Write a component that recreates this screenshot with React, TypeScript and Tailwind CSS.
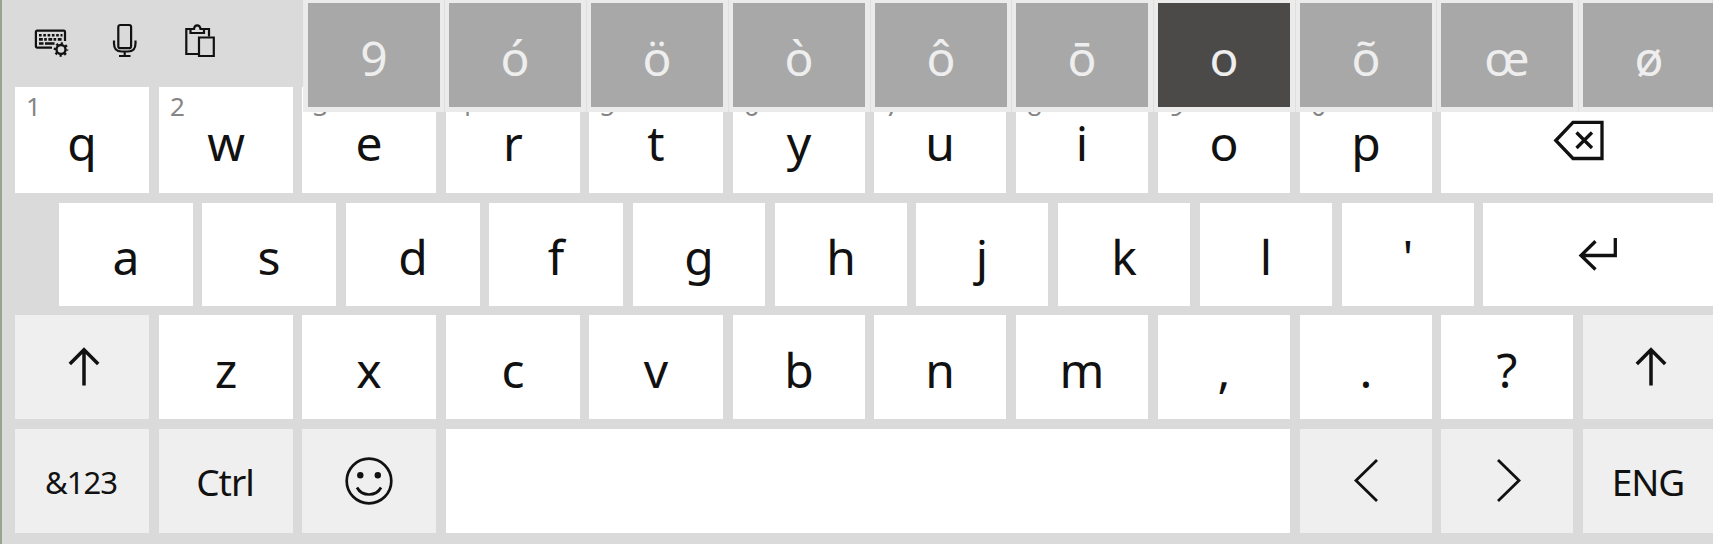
import React from "react";

const INK = "#111111";

type KeyProps = {
  label?: string;
  hint?: string;
  wide?: string;
  tone?: string;
  pad?: string;
  text?: string;
  children?: React.ReactNode;
};

function Key({ label, hint, wide = "w-[134px]", tone = "bg-white", pad = "pt-[30px]", text = "text-[48px]", children }: KeyProps) {
  return (
    <button className={`relative flex h-full justify-center overflow-hidden ${wide} ${tone} ${pad}`}>
      {hint && <span className="absolute left-[11px] top-[6px] text-[26px] leading-none text-[#858585]">{hint}</span>}
      {label && <span className={`whitespace-pre leading-none ${text}`}>{label}</span>}
      {children}
    </button>
  );
}

const widthAt = (i: number) => (i < 5 ? "w-[134px]" : "w-[132px]");

function ShiftIcon() {
  return (
    <svg width="34" height="42" viewBox="0 0 34 42" fill="none" stroke={INK} strokeWidth="3.5">
      <path d="M17 39.5V4M2.8 18L17 3.8L31.2 18" />
    </svg>
  );
}

function KeyboardIcon() {
  return (
    <svg width="36" height="30" viewBox="0 0 36 30" fill="none" stroke={INK}>
      <path d="M18 19.6H3.2Q1.9 19.6 1.9 18.3V4Q1.9 2.7 3.2 2.7H29.8Q31 2.7 31 4V13" strokeWidth="2.2" />
      <path d="M5 7.2H28.5" strokeWidth="2.6" strokeDasharray="2.6 1.7" />
      <path d="M5 11.4H28.5" strokeWidth="2.6" strokeDasharray="3.8 1.4 2.6 1.6" />
      <path d="M5 15.5H9.5M11 15.5H20.5" strokeWidth="2.4" />
      <circle cx="27" cy="21.5" r="4.5" strokeWidth="2.4" />
      <circle cx="27" cy="21.5" r="6.1" strokeWidth="2.4" strokeDasharray="2.2 2.591" strokeDashoffset="1" />
    </svg>
  );
}

function MicIcon() {
  return (
    <svg width="26" height="36" viewBox="0 0 26 36" fill="none" stroke={INK} strokeWidth="2.2">
      <rect x="6.3" y="2" width="12.8" height="23.2" rx="2" />
      <path d="M2 17.5V20.5Q2 28.5 9.5 28.5H16Q23.5 28.5 23.5 20.5V17.5" />
      <path d="M12.7 28.5V33M7 33H18.5" />
    </svg>
  );
}

function PasteIcon() {
  return (
    <svg width="32" height="36" viewBox="0 0 32 36" fill="none" stroke={INK} strokeWidth="2.2">
      <path d="M14 31H2.3V6H7M19 6H25V13.5" />
      <path d="M6.5 6H10Q10.3 2.3 13.2 2.3T16.5 6H20V10H6.5Z" />
      <path d="M15 14.5H29.8V33H15Z" />
    </svg>
  );
}

function BackspaceIcon() {
  return (
    <svg width="52" height="43" viewBox="0 0 52 43" fill="none" stroke={INK} strokeWidth="3.3">
      <path d="M2.8 21.5L20 3.3H49V39.5H20Z" />
      <path d="M23.5 13.5L39 29M39 13.5L23.5 29" />
    </svg>
  );
}

function EnterIcon() {
  return (
    <svg width="40" height="34" viewBox="0 0 40 34" fill="none" stroke={INK} strokeWidth="3.3">
      <path d="M37.3 1V18.5H3M17.5 4.3L3 18.5L17.5 32.5" />
    </svg>
  );
}

function SmileIcon() {
  return (
    <svg width="48" height="48" viewBox="0 0 48 48" fill="none" stroke={INK} strokeWidth="2.7">
      <circle cx="24" cy="24" r="22.3" />
      <path d="M12 30.5C17 39.8 31 39.8 36 30.5" />
      <circle cx="15.3" cy="18.2" r="3.2" fill={INK} stroke="none" />
      <circle cx="32.8" cy="18.2" r="3.2" fill={INK} stroke="none" />
    </svg>
  );
}

function Chevron({ d }: { d: string }) {
  return (
    <svg width="26" height="44" viewBox="0 0 26 44" fill="none" stroke={INK} strokeWidth="2.8">
      <path d={d} />
    </svg>
  );
}

const topRow = ["q", "w", "e", "r", "t", "y", "u", "i", "o", "p"];
const homeRow = ["a", "s", "d", "f", "g", "h", "j", "k", "l", "'"];
const lowRow = ["z", "x", "c", "v", "b", "n", "m", ",", ".", "?"];
const variants = ["9", "ó", "ö", "ò", "ô", "ō", "o", "õ", "œ", "ø"];

export default function App() {
  return (
    <div
      className="relative h-[544px] w-[1713px] overflow-hidden border-l-2 border-[#95a48c] bg-[#dadada] pl-[13px] text-[#111111]"
      style={{ fontFamily: '"Noto Sans", "Open Sans", sans-serif' }}
    >
      <header className="flex h-[87px] items-start pl-[19px] pt-[23px]">
        <div className="flex w-[78px] pt-[5px]"><KeyboardIcon /></div>
        <div className="flex w-[72px]"><MicIcon /></div>
        <PasteIcon />
      </header>

      <div className="grid h-[106px] grid-cols-[144px_143px_144px_143px_144px_141px_142px_142px_142px_141px_272px]">
        {topRow.map((k, i) => (
          <Key key={k} label={k} hint={String((i + 1) % 10)} wide={widthAt(i)} pad="pt-[32px]" />
        ))}
        <Key wide="w-[272px]" pad="pt-[32px] pl-[3px]"><BackspaceIcon /></Key>
      </div>

      <div className="ml-[44px] mt-[10px] grid h-[103px] grid-cols-[143px_144px_143px_144px_142px_141px_142px_142px_142px_141px_230px]">
        {homeRow.map((k, i) => (
          <Key key={k} label={k} wide={i < 4 ? "w-[134px]" : "w-[132px]"} pad="pt-[30px]" />
        ))}
        <Key wide="w-[230px]" pad="pt-[34px]"><EnterIcon /></Key>
      </div>

      <div className="mt-[9px] grid h-[104px] grid-cols-[144px_143px_144px_143px_144px_141px_142px_142px_142px_141px_142px_130px]">
        <Key tone="bg-[#efefef]" pad="pt-[31px] pl-[3px]"><ShiftIcon /></Key>
        {lowRow.map((k, i) => (
          <Key key={k} label={k} wide={widthAt(i + 1)} pad="pt-[31px]" />
        ))}
        <Key tone="bg-[#efefef]" wide="w-[132px]" pad="pt-[31px] pl-[3px]"><ShiftIcon /></Key>
      </div>

      <div className="mt-[10px] grid h-[104px] grid-cols-[144px_143px_144px_854px_141px_142px_130px]">
        <Key tone="bg-[#efefef]" label="&123" text="text-[31px] tracking-[-1px]" pad="pt-[38px] pr-[2px]" />
        <Key tone="bg-[#efefef]" label="Ctrl" text="text-[37px] tracking-[-1px]" pad="pt-[34px] pr-[2px]" />
        <Key tone="bg-[#efefef]" pad="pt-[28px]"><SmileIcon /></Key>
        <Key wide="w-[844px]" />
        <Key tone="bg-[#efefef]" wide="w-[132px]" pad="pt-[29px]"><Chevron d="M24 2L3 22.5L24 43" /></Key>
        <Key tone="bg-[#efefef]" wide="w-[132px]" pad="pt-[29px] pl-[2px]"><Chevron d="M3 2L24 22.5L3 43" /></Key>
        <Key tone="bg-[#efefef]" wide="w-[132px]" label="ENG" text="text-[37px] tracking-[-1px]" pad="pt-[34px] pr-[2px]" />
      </div>

      <div className="absolute left-[301px] top-0 grid h-[112px] grid-cols-[142px_142px_142px_142px_141px_142px_142px_141px_142px_134px] bg-[#ebebeb] text-[#eeeeee]">
        {variants.map((v, i) => (
          <div key={v} className={`h-[112px] border-r border-[#dfdfdf] pb-[5px] pt-[3px] ${i === 0 ? "pl-[5px]" : "pl-[4px]"}`}>
            <Key label={v} wide="w-[132px]" tone={v === "o" ? "bg-[#4b4a48]" : "bg-[#a8a8a8]"} pad="pt-[31px]" />
          </div>
        ))}
      </div>
    </div>
  );
}
